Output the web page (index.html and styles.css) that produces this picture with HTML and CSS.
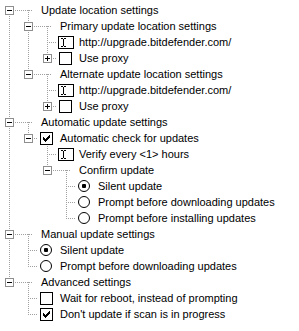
FILE: index.html
```html
<!DOCTYPE html>
<html lang="en">
	<head>
		<meta charset="UTF-8" />
		<title>Update settings</title>
		<link rel="stylesheet" href="styles.css">
	</head>
	<body>
		<div class="tree">
			<!-- update location -->
			<div class="row"><span class="c n-first"><span class="box minus"></span></span><span class="c i grp"></span><span class="t">Update location settings</span></div>
			<div class="row"><span class="c v"></span><span class="c n-mid"><span class="box minus"></span></span><span class="c i grp"></span><span class="t">Primary update location settings</span></div>
			<div class="row"><span class="c v"></span><span class="c v"></span><span class="c n-mid"></span><span class="c i"><span class="edit"><svg width="14" height="11"><g fill="#000"><rect x="2" y="1" width="2" height="1"/><rect x="5" y="1" width="2" height="1"/><rect x="4" y="2" width="1" height="7"/><rect x="2" y="9" width="2" height="1"/><rect x="5" y="9" width="2" height="1"/></g></svg></span></span><span class="t">http://upgrade.bitdefender.com/</span></div>
			<div class="row"><span class="c v"></span><span class="c v"></span><span class="c n-last"><span class="box plus"></span></span><span class="c i"><span class="chk"></span></span><span class="t">Use proxy</span></div>
			<div class="row"><span class="c v"></span><span class="c n-last"><span class="box minus"></span></span><span class="c i grp"></span><span class="t">Alternate update location settings</span></div>
			<div class="row"><span class="c v"></span><span class="c"></span><span class="c n-mid"></span><span class="c i"><span class="edit"><svg width="14" height="11"><g fill="#000"><rect x="2" y="1" width="2" height="1"/><rect x="5" y="1" width="2" height="1"/><rect x="4" y="2" width="1" height="7"/><rect x="2" y="9" width="2" height="1"/><rect x="5" y="9" width="2" height="1"/></g></svg></span></span><span class="t">http://upgrade.bitdefender.com/</span></div>
			<div class="row"><span class="c v"></span><span class="c"></span><span class="c n-last"><span class="box plus"></span></span><span class="c i"><span class="chk"></span></span><span class="t">Use proxy</span></div>

			<!-- automatic -->
			<div class="row"><span class="c n-mid"><span class="box minus"></span></span><span class="c i grp"></span><span class="t">Automatic update settings</span></div>
			<div class="row"><span class="c v"></span><span class="c n-last"><span class="box minus"></span></span><span class="c i grp-img"><span class="chk"><svg width="11" height="11"><g fill="#000"><rect x="2" y="4" width="1" height="3"/><rect x="3" y="5" width="1" height="3"/><rect x="4" y="6" width="1" height="3"/><rect x="5" y="5" width="1" height="3"/><rect x="6" y="4" width="1" height="3"/><rect x="7" y="3" width="1" height="3"/><rect x="8" y="2" width="1" height="3"/></g></svg></span></span><span class="t">Automatic check for updates</span></div>
			<div class="row"><span class="c v"></span><span class="c"></span><span class="c n-mid"></span><span class="c i"><span class="edit"><svg width="14" height="11"><g fill="#000"><rect x="2" y="1" width="2" height="1"/><rect x="5" y="1" width="2" height="1"/><rect x="4" y="2" width="1" height="7"/><rect x="2" y="9" width="2" height="1"/><rect x="5" y="9" width="2" height="1"/></g></svg></span></span><span class="t">Verify every &lt;1&gt; hours</span></div>
			<div class="row"><span class="c v"></span><span class="c"></span><span class="c n-last"><span class="box minus"></span></span><span class="c i grp"></span><span class="t">Confirm update</span></div>
			<div class="row"><span class="c v"></span><span class="c"></span><span class="c"></span><span class="c n-mid"></span><span class="c i"><span class="radio on"></span></span><span class="t">Silent update</span></div>
			<div class="row"><span class="c v"></span><span class="c"></span><span class="c"></span><span class="c n-mid"></span><span class="c i"><span class="radio"></span></span><span class="t">Prompt before downloading updates</span></div>
			<div class="row"><span class="c v"></span><span class="c"></span><span class="c"></span><span class="c n-last"></span><span class="c i"><span class="radio"></span></span><span class="t">Prompt before installing updates</span></div>

			<!-- manual -->
			<div class="row"><span class="c n-mid"><span class="box minus"></span></span><span class="c i grp"></span><span class="t">Manual update settings</span></div>
			<div class="row"><span class="c v"></span><span class="c n-mid"></span><span class="c i"><span class="radio on"></span></span><span class="t">Silent update</span></div>
			<div class="row"><span class="c v"></span><span class="c n-last"></span><span class="c i"><span class="radio"></span></span><span class="t">Prompt before downloading updates</span></div>

			<!-- advanced -->
			<div class="row"><span class="c n-last"><span class="box minus"></span></span><span class="c i grp"></span><span class="t">Advanced settings</span></div>
			<div class="row"><span class="c"></span><span class="c n-mid"></span><span class="c i"><span class="chk"></span></span><span class="t">Wait for reboot, instead of prompting</span></div>
			<div class="row"><span class="c"></span><span class="c n-last"></span><span class="c i"><span class="chk"><svg width="11" height="11"><g fill="#000"><rect x="2" y="4" width="1" height="3"/><rect x="3" y="5" width="1" height="3"/><rect x="4" y="6" width="1" height="3"/><rect x="5" y="5" width="1" height="3"/><rect x="6" y="4" width="1" height="3"/><rect x="7" y="3" width="1" height="3"/><rect x="8" y="2" width="1" height="3"/></g></svg></span></span><span class="t">Don't update if scan is in progress</span></div>
		</div>
	</body>
</html>
```

FILE: styles.css
```css
:root {
	--dot: #a0a0a0;
	--dv: repeating-linear-gradient(to bottom, var(--dot) 0 1px, transparent 1px 2px);
	--dh: repeating-linear-gradient(to right, var(--dot) 0 1px, transparent 1px 2px);
}
html {
	background: #fff;
}
body {
	margin: 0;
	color: #000;
	font: 11px/16px "Liberation Sans", Arial, sans-serif;
}
.tree {
	padding-top: 2px;
}
.row {
	display: flex;
	height: 16px;
}
.c {
	flex: 0 0 19px;
	height: 16px;
}
.t {
	padding-left: 3px;
	white-space: nowrap;
}

/* tree lines */
.v {
	background: var(--dv) 9px 0 / 1px 16px no-repeat;
}
.n-first {
	background: var(--dv) 9px 8px / 1px 8px no-repeat, var(--dh) 9px 8px / 10px 1px no-repeat;
}
.n-mid {
	background: var(--dv) 9px 0 / 1px 16px no-repeat, var(--dh) 9px 8px / 10px 1px no-repeat;
}
.n-last {
	background: var(--dv) 9px 0 / 1px 9px no-repeat, var(--dh) 9px 8px / 10px 1px no-repeat;
}
.grp {
	background: var(--dh) 0 8px / 13px 1px no-repeat, var(--dv) 9px 8px / 1px 8px no-repeat;
}
.grp-img {
	background: var(--dv) 9px 14px / 1px 2px no-repeat;
}

/* expand buttons */
.box {
	display: block;
	width: 9px;
	height: 9px;
	box-sizing: border-box;
	margin: 4px 0 0 5px;
	border: 1px solid #8e8e8e;
}
.minus {
	background: linear-gradient(#000, #000) 1px 3px / 5px 1px no-repeat, #fff;
}
.plus {
	background: linear-gradient(#000, #000) 1px 3px / 5px 1px no-repeat, linear-gradient(#000, #000) 3px 1px / 1px 5px no-repeat, #fff;
}

/* state images */
.i {
	display: flex;
	align-items: center;
}
.chk {
	display: block;
	width: 13px;
	height: 13px;
	box-sizing: border-box;
	margin-left: 2px;
	border: 1px solid #000;
	background: #fff;
}
.chk svg,
.edit svg {
	display: block;
}
.edit {
	display: block;
	width: 16px;
	height: 13px;
	box-sizing: border-box;
	margin-left: 1px;
	border: 1px solid #000;
	background: #fff;
}
.radio {
	display: block;
	width: 12px;
	height: 12px;
	box-sizing: border-box;
	margin-left: 2px;
	border: 1px solid #000;
	border-radius: 50%;
	background: #fff;
}
.radio.on {
	background: radial-gradient(circle, #000 0 2px, #fff 2.5px);
}
```
